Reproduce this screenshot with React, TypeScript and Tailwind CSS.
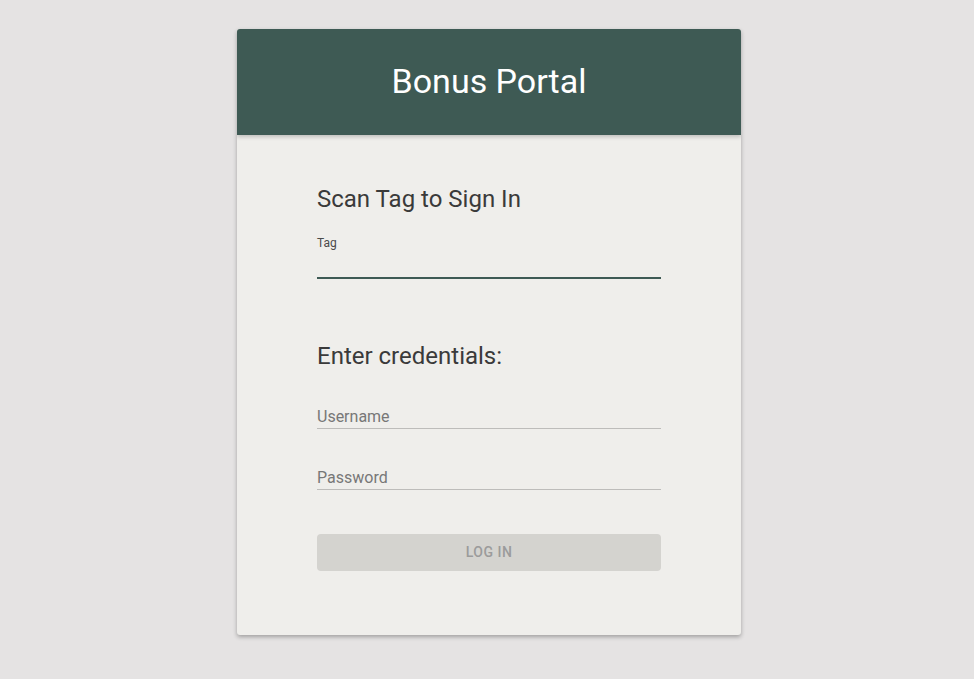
import React, { useState } from "react";

export default function App() {
  const [tag, setTag] = useState("");
  const [username, setUsername] = useState("");
  const [password, setPassword] = useState("");

  return (
    <div
      className="min-h-screen bg-[#e5e3e3] flex justify-center pt-[29px] antialiased"
      style={{ fontFamily: "Roboto, 'Liberation Sans', sans-serif" }}
    >
      <div className="ml-[4px] w-[504px] h-[606px] bg-[#efeeeb] rounded-[3px] shadow-[0_2px_4px_rgba(0,0,0,0.3)] flex flex-col overflow-hidden">
        {/* Header */}
        <div className="h-[106px] shrink-0 bg-[#3e5a54] flex items-center justify-center pb-[2px] shadow-[0_2px_4px_rgba(0,0,0,0.2)] relative z-10">
          <h1 className="text-[34px] text-white font-normal leading-none">Bonus Portal</h1>
        </div>

        {/* Body */}
        <div className="px-[80px] pt-[48px] flex flex-col">
          <h2 className="text-[24px] leading-[32px] text-[#3a3a3a] font-normal">Scan Tag to Sign In</h2>

          <div className="mt-[20px] flex flex-col">
            <label className="text-[12px] leading-[16px] text-[#4a4a4a]">Tag</label>
            <input
              value={tag}
              onChange={(e) => setTag(e.target.value)}
              className="h-[28px] bg-transparent outline-none border-b-2 border-[#3e5a54] text-[16px] text-[#333]"
            />
          </div>

          <h2 className="mt-[61px] text-[24px] leading-[32px] text-[#3a3a3a] font-normal">Enter credentials:</h2>

          <input
            value={username}
            onChange={(e) => setUsername(e.target.value)}
            placeholder="Username"
            className="mt-[33px] h-[24px] pb-0 bg-transparent outline-none border-b border-[#bdbcba] text-[16px] leading-[19px] text-[#333] placeholder:text-[#777]"
          />

          <input
            type="password"
            value={password}
            onChange={(e) => setPassword(e.target.value)}
            placeholder="Password"
            className="mt-[37px] h-[24px] pb-0 bg-transparent outline-none border-b border-[#bdbcba] text-[16px] leading-[19px] text-[#333] placeholder:text-[#777]"
          />

          <button
            disabled
            className="mt-[44px] h-[37px] rounded-[4px] bg-[#d4d3cf] text-[14px] font-medium tracking-[0.5px] text-[#9b9b9b] uppercase"
          >
            Log In
          </button>
        </div>
      </div>
    </div>
  );
}
